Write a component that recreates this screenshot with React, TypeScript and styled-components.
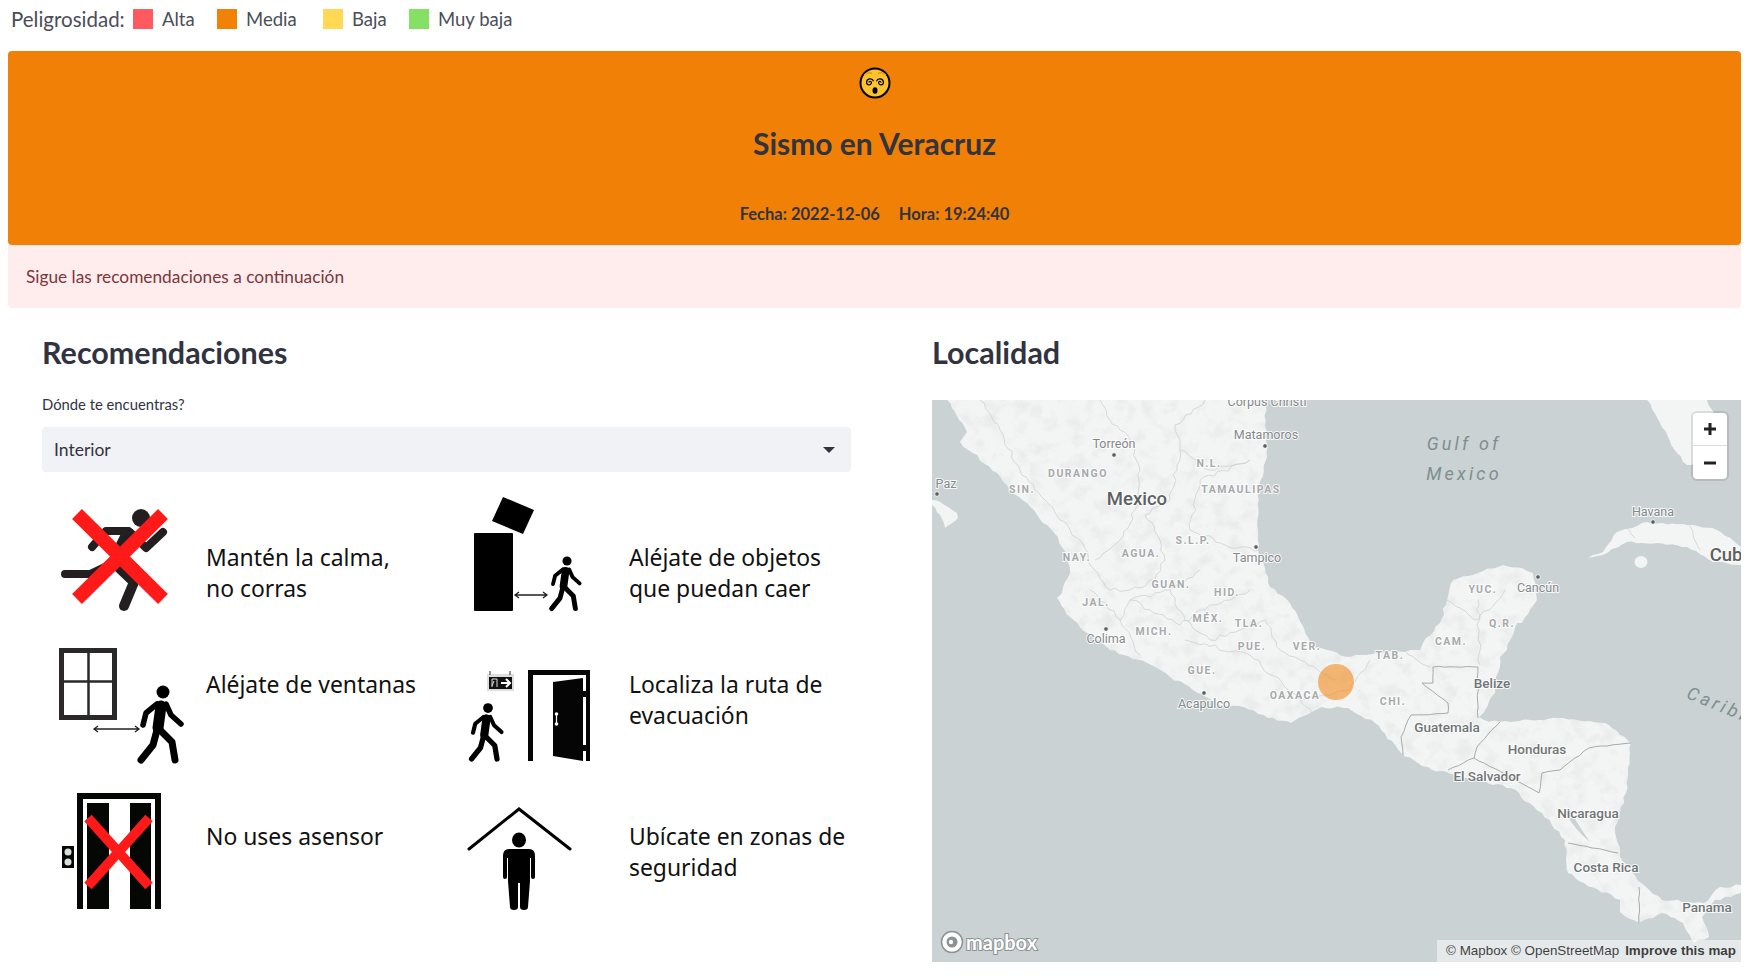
import React from "react";
import styled, { createGlobalStyle } from "styled-components";

const Global = createGlobalStyle`
  html, body { margin: 0; padding: 0; background: #fff; overflow: hidden; }
  body { font-family: "Lato", "Liberation Sans", sans-serif; color: #31333f; }
`;

const Page = styled.div`
  width: 1750px;
  height: 976px;
  padding: 0 9px 0 8px;
  box-sizing: border-box;
`;
const Legend = styled.div`
  display: flex;
  align-items: center;
  height: 51px;
  padding: 0 0 13px 3px;
  box-sizing: border-box;
  font-size: 18.5px;
  color: #4b4d57;
`;
const LegendTitle = styled.span`
  width: 122px;
  font-size: 20.5px;
  white-space: nowrap;
`;
const LegendItem = styled.div<{ $w: number }>`
  width: ${(p) => p.$w}px;
  display: flex;
  align-items: center;
  gap: 9px;
`;
const Swatch = styled.span<{ $c: string }>`
  width: 20px;
  height: 20px;
  background: ${(p) => p.$c};
`;
const Banner = styled.div`
  height: 194px;
  background: #f18006;
  border-radius: 4px;
  display: flex;
  flex-direction: column;
  align-items: center;
  padding-top: 16px;
  box-sizing: border-box;
`;
const Title = styled.h2`
  margin: 24px 0 0;
  font-size: 30px;
  line-height: 40px;
  font-weight: 700;
  color: #31333f;
`;
const DateLine = styled.div`
  margin-top: 41px;
  font-size: 16.5px;
  font-weight: 700;
  display: flex;
  gap: 19px;
`;
const Alert = styled.div`
  height: 63px;
  background: #ffeded;
  border-radius: 0 0 4px 4px;
  display: flex;
  align-items: center;
  padding-left: 18px;
  font-size: 17.3px;
  color: #7d353b;
`;
const Columns = styled.div`
  display: flex;
`;
const LeftCol = styled.section`
  width: 924px;
  padding-left: 34px;
  box-sizing: border-box;
`;
const RightCol = styled.section`
  width: 809px;
`;
const Heading = styled.h3`
  margin: 0;
  height: 92px;
  padding-top: 26px;
  box-sizing: border-box;
  font-size: 30.5px;
  line-height: 36px;
  font-weight: 700;
  color: #31333f;
`;
const FieldLabel = styled.div`
  font-size: 14.8px;
  line-height: 20px;
  margin-top: -6px;
  height: 33px;
`;
const Select = styled.div`
  width: 809px;
  height: 45px;
  background: #f0f2f6;
  border-radius: 4px;
  display: flex;
  align-items: center;
  justify-content: space-between;
  padding: 0 16px 0 12px;
  box-sizing: border-box;
  font-size: 17.5px;
`;
const Caret = styled.span`
  width: 0;
  height: 0;
  border-left: 6px solid transparent;
  border-right: 6px solid transparent;
  border-top: 6px solid #31333f;
`;
const Recs = styled.div`
  display: grid;
  grid-template-columns: 423px 423px;
  grid-template-rows: 145px 145px 130px;
  margin-top: 24px;
`;
const Rec = styled.div`
  display: flex;
  align-items: flex-start;
`;
const RecIcon = styled.svg`
  width: 165px;
  height: 145px;
  flex: none;
  display: block;
`;
const RecText = styled.div<{ $top: number }>`
  padding-top: ${(p) => p.$top}px;
  margin-left: -1px;
  font-family: "Noto Sans", "Open Sans", sans-serif;
  font-size: 22.9px;
  line-height: 31px;
  color: #111;
  white-space: pre-line;
`;
const MapBox = styled.div`
  position: relative;
  width: 809px;
  height: 562px;
  overflow: hidden;
  background: #cad2d3;
`;
const MapSvg = styled.svg`
  display: block;
  width: 809px;
  height: 562px;
`;
const Zoom = styled.div`
  position: absolute;
  top: 13px;
  right: 14px;
  width: 34px;
  height: 66px;
  background: #fff;
  border-radius: 4px;
  box-shadow: 0 0 0 2px rgba(0, 0, 0, 0.1);
  display: grid;
  grid-template-rows: 1fr 1fr;
`;
const ZoomBtn = styled.div<{ $line?: boolean }>`
  display: flex;
  align-items: center;
  justify-content: center;
  border-bottom: ${(p) => (p.$line ? "1px solid #ddd" : "none")};
`;
const Attribution = styled.div`
  position: absolute;
  right: 0;
  bottom: 0;
  height: 22px;
  width: 304px;
  background: rgba(255, 255, 255, 0.5);
  display: flex;
  align-items: center;
  justify-content: flex-end;
  gap: 6px;
  padding: 0 5px 2px 0;
  box-sizing: border-box;
  font-family: "Liberation Sans", sans-serif;
  font-size: 13.4px;
  white-space: nowrap;
  color: rgba(0, 0, 0, 0.75);
`;
const Improve = styled.b`
  font-weight: 700;
`;
const Logo = styled.div`
  position: absolute;
  left: 8px;
  bottom: 8px;
  display: flex;
  align-items: center;
  gap: 2px;
`;
const LogoText = styled.span`
  font-family: "Lato", sans-serif;
  font-weight: 700;
  font-size: 20px;
  line-height: 24px;
  color: #fff;
  -webkit-text-stroke: 2px #8c9192;
  paint-order: stroke fill;
`;

const Walker = ({ x, y, s }: { x: number; y: number; s: number }) => (
  <g transform={`translate(${x} ${y}) scale(${s})`} fill="none" stroke="#000" strokeLinecap="round" strokeLinejoin="round">
    <circle cx="0" cy="0" r="6.5" fill="#000" stroke="none" />
    <path d="M-2 14 L-5 36" strokeWidth="11" />
    <path d="M-6 12 L-17 21 L-20 33" strokeWidth="5.5" />
    <path d="M3 12 L8 23 L18 32" strokeWidth="5.5" />
    <path d="M-6 38 L-10 53 L-22 68" strokeWidth="7" />
    <path d="M-3 38 L9 50 L12 68" strokeWidth="7" />
  </g>
);
const Arrow = ({ x1, x2, y }: { x1: number; x2: number; y: number }) => (
  <path
    d={`M${x1} ${y}H${x2}M${x1 + 4} ${y - 3}L${x1} ${y}L${x1 + 4} ${y + 3}M${x2 - 4} ${y - 3}L${x2} ${y}L${x2 - 4} ${y + 3}`}
    stroke="#222"
    strokeWidth="1.3"
    fill="none"
  />
);

const Runner = () => (
  <RecIcon viewBox="42 495 165 145">
    <circle cx="141" cy="517" r="9" fill="#231f20" />
    <g fill="none" stroke="#231f20" strokeWidth="8" strokeLinecap="round" strokeLinejoin="round">
      <path d="M92 546L106 530L128 530L113 562L90 573L65 573" />
      <path d="M128 532L116 556" strokeWidth="12" />
      <path d="M131 532L146 547L163 531" />
      <path d="M114 562L134 581L124 605" strokeWidth="10" />
    </g>
    <path d="M77 513L163 598M163 513L77 598" stroke="#ff1a1a" strokeWidth="14" />
  </RecIcon>
);
const WindowIcon = () => (
  <RecIcon viewBox="42 640 165 145">
    <rect x="61.5" y="649.5" width="53" height="67" fill="none" stroke="#2a2829" strokeWidth="5" />
    <path d="M88.500 650V716M62 680.500H114" stroke="#2a2829" strokeWidth="2.500" />
    <Arrow x1={94} x2={139} y={728} />
    <Walker x={163} y={691} s={1} />
  </RecIcon>
);
const Elevator = () => (
  <RecIcon viewBox="42 785 165 145">
    <rect x="77" y="792" width="84" height="116" fill="#050705" />
    <rect x="83" y="798" width="72" height="110" fill="#fff" />
    <rect x="87" y="802" width="22" height="106" fill="#050705" />
    <rect x="130" y="802" width="21" height="106" fill="#050705" />
    <rect x="62" y="845" width="12" height="22" fill="#050705" />
    <circle cx="68" cy="851" r="3.500" fill="#ddd" />
    <circle cx="68" cy="861" r="3.500" fill="#ddd" />
    <path d="M88 817L149 885M149 817L88 885" stroke="#ff1a1a" strokeWidth="10" />
  </RecIcon>
);
const Falling = () => (
  <RecIcon viewBox="465 495 165 145">
    <path d="M503 496L534 509L523 533L492 520Z" fill="#000" />
    <rect x="474" y="532" width="39" height="78" rx="1" fill="#000" />
    <Arrow x1={515} x2={547} y={594} />
    <Walker x={567} y={560} s={0.7} />
  </RecIcon>
);
const DoorIcon = () => (
  <RecIcon viewBox="465 640 165 145">
    <rect x="487" y="673" width="27" height="17" fill="#ddd" />
    <path d="M490 670V674M510 670V674" stroke="#333" strokeWidth="1" />
    <rect x="489" y="676" width="23" height="12" fill="#111" />
    <path d="M501 682H510M506 678L510 682L506 686" stroke="#fff" strokeWidth="2" fill="none" />
    <path d="M492 686V678H497V686M494 680L492 685" stroke="#ddd" strokeWidth="1" fill="none" />
    <Walker x={488} y={707} s={0.75} />
    <path d="M528 760V669H590V760H586V674H533V760Z" fill="#050505" />
    <path d="M553 681L583 677V760L553 755Z" fill="#050505" />
    <rect x="583" y="690" width="4" height="6" fill="#050505" />
    <rect x="583" y="744" width="4" height="6" fill="#050505" />
    <path d="M556.500 713V723" stroke="#fff" strokeWidth="1.200" />
    <circle cx="556.500" cy="713" r="1.800" fill="#fff" />
    <circle cx="556.500" cy="723" r="1.800" fill="#fff" />
  </RecIcon>
);
const Shelter = () => (
  <RecIcon viewBox="465 785 165 145">
    <path d="M469 848L519 808L570 848" fill="none" stroke="#000" strokeWidth="3" strokeLinecap="round" />
    <ellipse cx="519" cy="839" rx="7" ry="7.500" fill="#000" />
    <path d="M509 848H529Q535 848 535 855V876Q535 878 533 878Q531 878 531 876V857H530V880L528 906Q528 909 524 909Q520 909 520 906V882H518V906Q518 909 514 909Q510 909 510 906L508 880V857H507V876Q507 878 505 878Q503 878 503 876V855Q503 848 509 848Z" fill="#000" />
  </RecIcon>
);

const spiral = "M10 15.5a1.2 1.2 0 0 1 2.4 0a2.4 2.4 0 0 1 -4.8 0a3.6 3.6 0 0 1 7 -1.2";
const Face = () => (
  <svg width="32" height="32" viewBox="0 0 32 32">
    <circle cx="16" cy="16" r="14.500" fill="#fcc32c" stroke="#000" strokeWidth="2" />
    <path d="M5 8Q9 4.500 13 6.500M19 6.500Q23 4.500 27 8" stroke="#e59b12" strokeWidth="1.500" fill="none" />
    <path d={spiral} stroke="#000" strokeWidth="1.200" fill="none" />
    <path d={spiral} stroke="#000" strokeWidth="1.200" fill="none" transform="matrix(-1 0 0 1 32 0)" />
    <ellipse cx="16" cy="23.500" rx="2.500" ry="3.200" fill="#000" />
  </svg>
);

type L = [string, number, number];
const cities: L[] = [
  ["Corpus Christi", 1267, 401], ["Matamoros", 1266, 434], ["Torreón", 1114, 443], ["Paz", 946, 483],
  ["Tampico", 1257, 557], ["Colima", 1106, 638], ["Acapulco", 1204, 703], ["Havana", 1653, 511], ["Cancún", 1538, 587],
];
const dots: [number, number][] = [
  [1265, 446], [1114, 455], [937, 494], [1256, 547], [1106, 629], [1204, 693], [1653, 522], [1538, 577],
];
const states: L[] = [
  ["DURANGO", 1078, 473], ["SIN.", 1022, 489], ["N.L.", 1209, 463], ["TAMAULIPAS", 1241, 489], ["S.L.P.", 1193, 540],
  ["AGUA.", 1141, 553], ["NAY.", 1077, 557], ["GUAN.", 1171, 584], ["HID.", 1227, 592], ["JAL.", 1096, 602],
  ["MÉX.", 1208, 618], ["TLA.", 1249, 623], ["MICH.", 1154, 631], ["PUE.", 1252, 646], ["VER.", 1307, 646],
  ["GUE.", 1202, 670], ["OAXACA", 1295, 695], ["YUC.", 1483, 589], ["Q.R.", 1502, 623], ["CAM.", 1451, 641],
  ["TAB.", 1390, 655], ["CHI.", 1393, 701],
];
const countries: L[] = [
  ["Belize", 1492, 683], ["Guatemala", 1447, 727], ["Honduras", 1537, 749], ["El Salvador", 1487, 776],
  ["Nicaragua", 1588, 813], ["Costa Rica", 1606, 867], ["Panama", 1707, 907],
];

/* Breaks each straight run of a polyline into short wobbling steps, so coasts and borders read as surveyed. */
const rough = (d: string, amp: number, step: number) => {
  let seed = 1;
  const noise = () => {
    seed += 1;
    const v = Math.sin(seed * 12.9898) * 43758.5453;
    return (v - Math.floor(v) - 0.5) * 2;
  };
  return d
    .split("M")
    .filter(Boolean)
    .map((sub) => {
      const closed = sub.includes("Z");
      const pts = sub
        .replace("Z", "")
        .split("L")
        .map((p) => p.trim().split(" ").map(Number));
      let out = `M${pts[0][0]} ${pts[0][1]}`;
      for (let i = 1; i < pts.length; i++) {
        const [x0, y0] = pts[i - 1];
        const [x1, y1] = pts[i];
        const len = Math.hypot(x1 - x0, y1 - y0);
        const n = Math.max(1, Math.round(len / step));
        for (let k = 1; k <= n; k++) {
          const t = k / n;
          const off = k === n ? 0 : noise() * amp;
          const px = x0 + (x1 - x0) * t - ((y1 - y0) / len) * off;
          const py = y0 + (y1 - y0) * t + ((x1 - x0) / len) * off;
          out += `L${px.toFixed(1)} ${py.toFixed(1)}`;
        }
      }
      return out + (closed ? "Z" : "");
    })
    .join("");
};

const landBase =
  "M947 400L967 432L960 442L973 453L997 473L1010 490L1027 503L1043 523L1058 537L1067 557L1070 573L1062 593L1057 598L1070 617L1087 633L1110 650L1147 663L1170 677L1193 690L1223 707L1244 707L1268 718L1291 723L1322 707L1348 708L1375 723L1401 753L1432 770L1479 780L1516 790L1521 797L1542 813L1565 840L1568 873L1584 883L1620 900L1620 912L1639 923L1662 913L1683 923L1694 943L1709 937L1702 917L1715 900L1741 893L1741 885L1720 887L1704 903L1662 900L1641 883L1620 857L1615 827L1626 793L1631 743L1605 723L1558 718L1510 722L1484 720L1479 717L1495 693L1500 657L1507 650L1517 623L1522 623L1537 600L1533 573L1522 568L1503 565L1453 580L1447 600L1440 623L1423 643L1420 650L1377 653L1350 657L1313 647L1290 603L1270 587L1258 550L1258 490L1267 457L1265 400Z";
const land = rough(landBase, 1.4, 5);
const baja = rough("M932 500L940 502L957 513L958 518L945 528L940 515L932 505Z", 0.8, 4);
const florida = rough("M1647 400L1660 423L1677 453L1687 465L1705 462L1722 440L1715 415L1707 400Z", 1.2, 5);
const cuba = rough("M1588 558L1603 552L1617 532L1647 522L1693 525L1717 530L1741 547L1741 565L1713 562L1687 547L1657 543L1627 542L1603 555Z", 1.2, 5);
const lightBorders = rough(
  "M980 400L1000 430L1020 470L1045 500L1060 520L1080 540L1095 570L1110 590M1100 400L1110 420L1130 440L1140 470L1135 510L1120 540L1095 560M1205 400L1175 425L1180 450L1210 470L1250 460M1180 450L1170 500L1145 515L1160 540L1165 560L1155 580L1130 590L1110 590M1250 460L1200 480L1190 530L1225 545L1260 550M1200 570L1170 590L1130 600L1120 620L1090 590M1130 600L1150 610L1180 625L1200 610L1230 600L1250 590M1170 590L1185 620L1210 640L1240 630L1265 620L1280 650L1300 660L1335 680M1120 620L1140 655M1185 640L1250 655L1300 700L1350 690L1370 660M1430 667L1400 650M1300 700L1320 720M1478 600L1480 665M1447 600L1478 620L1505 590M1625 526L1635 538M1690 526L1700 550",
  2.2,
  5
);
const strongBorders = rough(
  "M1433 667L1478 667L1478 718M1433 667L1433 683L1422 683L1448 703L1448 713L1411 715L1401 737L1403 755M1500 722L1477 747L1474 758L1448 770M1474 758L1521 783L1539 793L1542 773L1560 770L1589 748L1631 743M1568 843L1592 848L1618 853M1639 887L1639 923",
  0.7,
  6
);

const MapLabel = styled.text<{ $size: number; $fill: string; $spacing?: number; $weight?: number }>`
  font-family: "Roboto", "Liberation Sans", sans-serif;
  font-size: ${(p) => p.$size}px;
  font-weight: ${(p) => p.$weight ?? 400};
  fill: ${(p) => p.$fill};
  letter-spacing: ${(p) => p.$spacing ?? 0}px;
  text-anchor: middle;
  dominant-baseline: central;
  stroke: rgba(255, 255, 255, 0.85);
  stroke-width: 2px;
  paint-order: stroke fill;
`;
const SeaLabel = styled.text`
  font-family: "Roboto", "Liberation Sans", sans-serif;
  font-size: 18px;
  font-style: italic;
  letter-spacing: 3.2px;
  fill: #7f8e90;
  text-anchor: middle;
  dominant-baseline: central;
`;

const MapDrawing = () => (
  <MapSvg viewBox="932 400 809 562">
    <defs>
      <clipPath id="landClip">
        <path d={land} />
      </clipPath>
      <filter id="relief" x="0" y="0" width="100%" height="100%" colorInterpolationFilters="sRGB">
        <feTurbulence type="fractalNoise" baseFrequency="0.07" numOctaves="4" seed="7" />
        <feColorMatrix values="0 0 0 0 0.6  0 0 0 0 0.6  0 0 0 0 0.6  2.2 0 0 0 -1" />
      </filter>
    </defs>
    <rect x="932" y="400" width="809" height="562" fill="#cad2d3" />
    <path d={land} fill="#f3f4f4" />
    <g clipPath="url(#landClip)">
      <rect x="932" y="400" width="809" height="562" filter="url(#relief)" opacity="0.12" />
    </g>
    <path d={baja} fill="#f3f4f4" />
    <path d={florida} fill="#f3f4f4" />
    <path d={cuba} fill="#f3f4f4" />
    <ellipse cx="1641" cy="562" rx="6.500" ry="6" fill="#f3f4f4" />
    <path d="M1565 812Q1575 830 1590 842Q1578 825 1570 810Z" fill="#cad2d3" />
    <path d={lightBorders} fill="none" stroke="#cfd1d1" strokeWidth="0.800" />
    <path d={strongBorders} fill="none" stroke="#a8abab" strokeWidth="1" />
    <circle cx="1336" cy="682" r="18" fill="#f28107" fillOpacity="0.55" />
    {dots.map(([x, y]) => (
      <circle key={`${x}-${y}`} cx={x} cy={y} r="2.300" fill="#5b5f60" stroke="#fff" strokeWidth="0.800" />
    ))}
    {cities.map(([t, x, y]) => (
      <MapLabel key={t} x={x} y={y} $size={12.500} $fill="#83888a">{t}</MapLabel>
    ))}
    {states.map(([t, x, y]) => (
      <MapLabel key={t} x={x} y={y} $size={10.500} $fill="#a6a9aa" $spacing={1.500} $weight={700}>{t}</MapLabel>
    ))}
    {countries.map(([t, x, y]) => (
      <MapLabel key={t} x={x} y={y} $size={13.500} $fill="#6f7475" $weight={500}>{t}</MapLabel>
    ))}
    <MapLabel x={1137} y={499} $size={18.500} $fill="#5c6061" $weight={500}>Mexico</MapLabel>
    <MapLabel x={1731} y={555} $size={18.500} $fill="#5c6061" $weight={500}>Cuba</MapLabel>
    <SeaLabel x={1464} y={443}>Gulf of</SeaLabel>
    <SeaLabel x={1464} y={473}>Mexico</SeaLabel>
    <SeaLabel x={1738} y={712} transform="rotate(22 1738 712)">Caribbean</SeaLabel>
  </MapSvg>
);

export default function App() {
  return (
    <Page>
      <Global />
      <Legend>
        <LegendTitle>Peligrosidad:</LegendTitle>
        <LegendItem $w={84}><Swatch $c="#ff5a5f" />Alta</LegendItem>
        <LegendItem $w={106}><Swatch $c="#f28107" />Media</LegendItem>
        <LegendItem $w={86}><Swatch $c="#ffd953" />Baja</LegendItem>
        <LegendItem $w={110}><Swatch $c="#85e066" />Muy baja</LegendItem>
      </Legend>
      <Banner>
        <Face />
        <Title>Sismo en Veracruz</Title>
        <DateLine>
          <span>Fecha: 2022-12-06</span>
          <span>Hora: 19:24:40</span>
        </DateLine>
      </Banner>
      <Alert>Sigue las recomendaciones a continuación</Alert>
      <Columns>
        <LeftCol>
          <Heading>Recomendaciones</Heading>
          <FieldLabel>Dónde te encuentras?</FieldLabel>
          <Select>
            Interior
            <Caret />
          </Select>
          <Recs>
            <Rec><Runner /><RecText $top={46}>{"Mantén la calma,\nno corras"}</RecText></Rec>
            <Rec><Falling /><RecText $top={46}>{"Aléjate de objetos\nque puedan caer"}</RecText></Rec>
            <Rec><WindowIcon /><RecText $top={28}>Aléjate de ventanas</RecText></Rec>
            <Rec><DoorIcon /><RecText $top={28}>{"Localiza la ruta de\nevacuación"}</RecText></Rec>
            <Rec><Elevator /><RecText $top={35}>No uses asensor</RecText></Rec>
            <Rec><Shelter /><RecText $top={35}>{"Ubícate en zonas de\nseguridad"}</RecText></Rec>
          </Recs>
        </LeftCol>
        <RightCol>
          <Heading>Localidad</Heading>
          <MapBox>
            <MapDrawing />
            <Zoom>
              <ZoomBtn $line>
                <svg width="16" height="16" viewBox="0 0 16 16"><path d="M8 2V14M2 8H14" stroke="#222" strokeWidth="3" /></svg>
              </ZoomBtn>
              <ZoomBtn>
                <svg width="16" height="16" viewBox="0 0 16 16"><path d="M2 8H14" stroke="#222" strokeWidth="3" /></svg>
              </ZoomBtn>
            </Zoom>
            <Logo>
              <svg width="24" height="24" viewBox="0 0 24 24">
                <circle cx="12" cy="12" r="10.500" fill="#fff" stroke="#8c9192" strokeWidth="1.500" />
                <circle cx="12" cy="12" r="5.500" fill="#8c9192" />
                <circle cx="11" cy="12" r="2.200" fill="#fff" />
              </svg>
              <LogoText>mapbox</LogoText>
            </Logo>
            <Attribution>
              <span>© Mapbox © OpenStreetMap</span>
              <Improve>Improve this map</Improve>
            </Attribution>
          </MapBox>
        </RightCol>
      </Columns>
    </Page>
  );
}
